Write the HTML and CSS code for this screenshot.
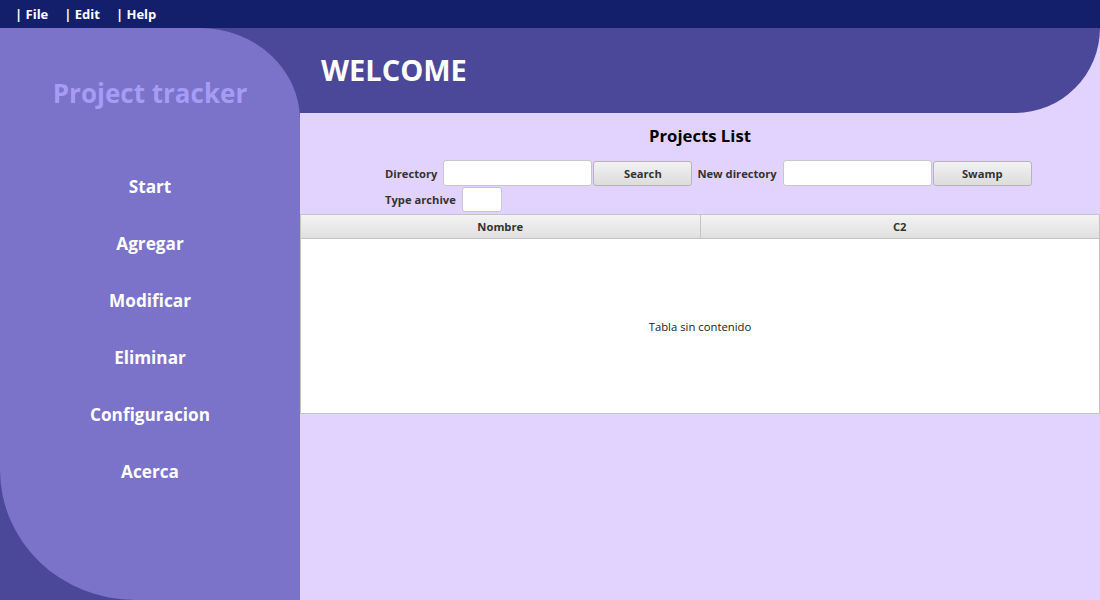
FILE: index.html
```html
<!DOCTYPE html>
<html>
<head>
<meta charset="utf-8">
<link rel="stylesheet" href="styles.css">
</head>
<body>
<div class="menubar">
  <span class="menu">| File</span>
  <span class="menu">| Edit</span>
  <span class="menu">| Help</span>
</div>
<div class="app">
  <aside class="sidebar">
    <div class="brand">Project tracker</div>
    <nav class="nav">
      <div class="nav-item">Start</div>
      <div class="nav-item">Agregar</div>
      <div class="nav-item">Modificar</div>
      <div class="nav-item">Eliminar</div>
      <div class="nav-item">Configuracion</div>
      <div class="nav-item">Acerca</div>
    </nav>
  </aside>
  <main class="main">
    <header class="header"><h1 class="welcome">WELCOME</h1></header>
    <section class="content">
      <h2 class="list-title">Projects List</h2>
      <div class="form">
        <div class="form-row">
          <label class="lbl">Directory</label>
          <input class="field wide" type="text">
          <button class="btn">Search</button>
          <label class="lbl gap">New directory</label>
          <input class="field wide" type="text">
          <button class="btn">Swamp</button>
        </div>
        <div class="form-row">
          <label class="lbl">Type archive</label>
          <input class="field small" type="text">
        </div>
      </div>
      <div class="table">
        <div class="thead">
          <div class="th">Nombre</div>
          <div class="th">C2</div>
        </div>
        <div class="tbody">Tabla sin contenido</div>
      </div>
    </section>
  </main>
</div>
</body>
</html>
```
FILE: styles.css
```css
* { box-sizing: border-box; }
html, body { margin: 0; padding: 0; }
body {
  width: 1100px;
  height: 600px;
  overflow: hidden;
  font-family: "Open Sans", "Noto Sans", sans-serif;
  background: #4b4799;
}
.menubar {
  height: 28px;
  background: #141f6b;
  display: flex;
  align-items: center;
  padding-left: 15px;
}
.menu {
  color: #fff;
  font-weight: bold;
  font-size: 13px;
  margin-right: 16px;
}
.app {
  display: flex;
  height: 572px;
}
.sidebar {
  width: 300px;
  background: #7b72c9;
  border-top-right-radius: 100px 92px;
  border-bottom-left-radius: 135px 130px;
  display: flex;
  flex-direction: column;
  align-items: center;
}
.brand {
  margin-top: 47px;
  color: #a69cf6;
  font-weight: bold;
  font-size: 26px;
  line-height: 36px;
}
.nav {
  margin-top: 64px;
  display: flex;
  flex-direction: column;
  align-items: center;
}
.nav-item {
  color: #fff;
  font-weight: bold;
  font-size: 17.2px;
  height: 57px;
  line-height: 24px;
}
.main {
  flex: 1;
  background: #e1d3fe;
  display: flex;
  flex-direction: column;
}
.header {
  height: 85px;
  background: #4b4799;
  border-bottom-right-radius: 85px;
  padding-left: 21px;
  display: flex;
  align-items: center;
}
.welcome {
  margin: 0 0 3px;
  color: #fff;
  font-size: 29px;
  font-weight: bold;
}
.list-title {
  margin: 11px 0 0;
  text-align: center;
  font-size: 16.7px;
  font-weight: bold;
  color: #000;
  line-height: 24px;
}
.form {
  margin: 12px 0 0 85px;
  display: flex;
  flex-direction: column;
  gap: 1px;
}
.form-row {
  display: flex;
  align-items: center;
}
.lbl {
  font-size: 11.2px;
  font-weight: bold;
  color: #333;
  margin-right: 6px;
}
.lbl.gap { margin-left: 5px; }
.field {
  height: 26px;
  border: 1px solid #c8c8c8;
  border-radius: 3px;
  background: #fff;
  outline: none;
}
.field.wide { width: 149px; }
.field.small { width: 40px; height: 25px; }
.btn {
  width: 99px;
  height: 25px;
  margin-left: 1px;
  border: 1px solid #b5b5b5;
  border-radius: 3px;
  background: linear-gradient(#f2f2f2, #dcdcdc);
  font-family: inherit;
  font-size: 11.2px;
  font-weight: bold;
  color: #333;
  padding: 0;
}
.table {
  margin-top: 2px;
  height: 200px;
  border: 1px solid #c4c4c4;
  background: #fff;
  display: flex;
  flex-direction: column;
}
.thead {
  display: flex;
  height: 24px;
  background: linear-gradient(#f3f3f3, #e0e0e0);
  border-bottom: 1px solid #c4c4c4;
}
.th {
  flex: 1;
  display: flex;
  align-items: center;
  justify-content: center;
  font-size: 11.2px;
  font-weight: bold;
  color: #333;
}
.th + .th { border-left: 1px solid #c4c4c4; }
.tbody {
  flex: 1;
  display: flex;
  align-items: center;
  justify-content: center;
  font-size: 11.3px;
  color: #222;
}
```
